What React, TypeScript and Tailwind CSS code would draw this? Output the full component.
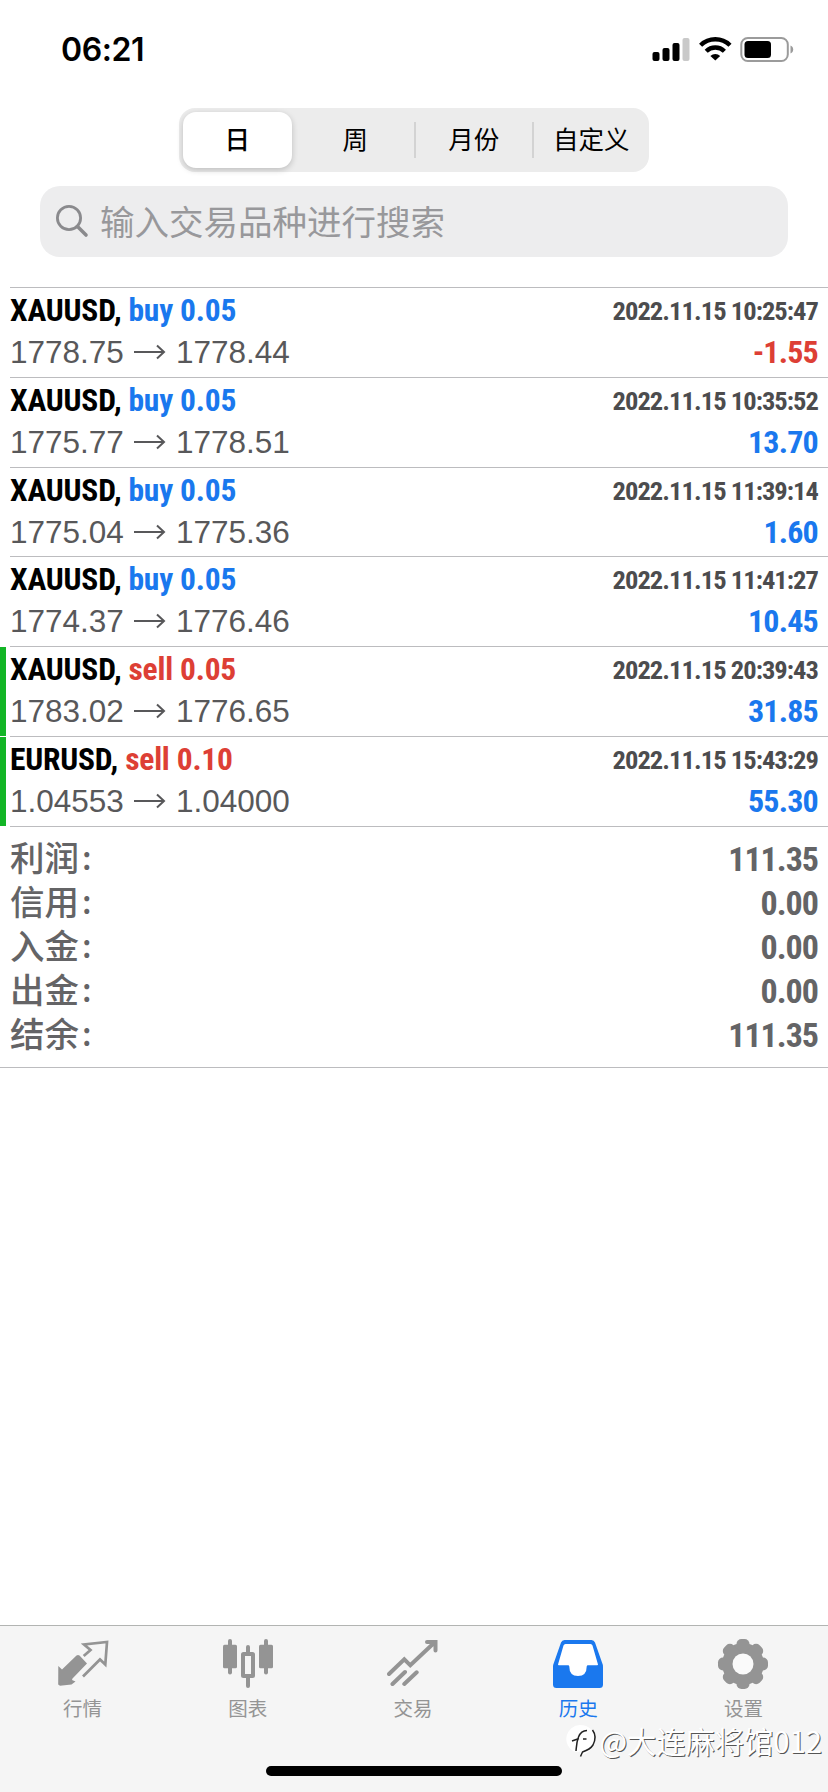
import type { ReactNode } from 'react';
import clsx from 'clsx';

interface Deal {
  symbol: string;
  side: 'buy' | 'sell';
  lots: string;
  open: string;
  close: string;
  time: string;
  profit: string;
  /** Green marker on the left edge of the row. */
  marked?: boolean;
}

const PERIODS = ['日', '周', '月份', '自定义'];

const DEALS: Deal[] = [
  { symbol: 'XAUUSD', side: 'buy', lots: '0.05', open: '1778.75', close: '1778.44', time: '2022.11.15 10:25:47', profit: '-1.55' },
  { symbol: 'XAUUSD', side: 'buy', lots: '0.05', open: '1775.77', close: '1778.51', time: '2022.11.15 10:35:52', profit: '13.70' },
  { symbol: 'XAUUSD', side: 'buy', lots: '0.05', open: '1775.04', close: '1775.36', time: '2022.11.15 11:39:14', profit: '1.60' },
  { symbol: 'XAUUSD', side: 'buy', lots: '0.05', open: '1774.37', close: '1776.46', time: '2022.11.15 11:41:27', profit: '10.45' },
  { symbol: 'XAUUSD', side: 'sell', lots: '0.05', open: '1783.02', close: '1776.65', time: '2022.11.15 20:39:43', profit: '31.85', marked: true },
  { symbol: 'EURUSD', side: 'sell', lots: '0.10', open: '1.04553', close: '1.04000', time: '2022.11.15 15:43:29', profit: '55.30', marked: true },
];

const SUMMARY = [
  { label: '利润', value: '111.35' },
  { label: '信用', value: '0.00' },
  { label: '入金', value: '0.00' },
  { label: '出金', value: '0.00' },
  { label: '结余', value: '111.35' },
];

function StatusBar() {
  return (
    <div className="flex h-[108px] items-start justify-between pl-[61px] pr-[34px] pt-[30px]">
      <span className="font-['Inter',sans-serif] text-[32px] font-semibold leading-10 tracking-[-0.4px]">06:21</span>
      <svg className="mt-[6px]" width="142" height="28" viewBox="0 0 142 28">
        <rect x="0.5" y="16" width="7" height="9" rx="2" />
        <rect x="10.5" y="12" width="7" height="13" rx="2" />
        <rect x="20.5" y="7" width="7" height="18" rx="2" />
        <rect x="30.5" y="2" width="7" height="23" rx="2" fill="#c9c9c9" />
        <g fill="none" stroke="#000" strokeWidth="4.4">
          <path d="M48.6 9.2a21 21 0 0 1 29.4 0" />
          <path d="M54.2 15.2a13 13 0 0 1 18.2 0" />
        </g>
        <path d="M63.3 24.6l-4.9-4.6a7.2 7.2 0 0 1 9.8 0z" />
        <rect x="89.3" y="2" width="46.5" height="23" rx="6.5" fill="none" stroke="#9b9b9b" strokeWidth="2" />
        <rect x="92.5" y="5" width="26.5" height="17" rx="3.5" />
        <path d="M138.5 9.5c3.6 1.2 3.6 6.8 0 8z" fill="#9b9b9b" />
      </svg>
    </div>
  );
}

function PeriodSwitch() {
  return (
    <div className="mx-auto flex h-16 w-[470px] rounded-2xl bg-[#ececec]">
      {PERIODS.map((period, i) => (
        <div key={period} className="flex flex-1 items-center">
          <div className={clsx('h-9 w-0.5', i > 1 && 'bg-[#d3d3d3]')} />
          <button
            type="button"
            className={clsx(
              'h-14 flex-1 pt-0.5 text-[25.5px] leading-none',
              i === 0 && 'ml-0.5 mr-[5px] rounded-[13px] bg-white font-medium shadow-[0_2px_6px_rgba(0,0,0,0.2)]',
              i === 1 && 'pr-0.5',
            )}
          >
            {period}
          </button>
        </div>
      ))}
    </div>
  );
}

function SearchField() {
  return (
    <div className="mx-10 mt-3.5 flex h-[71px] items-center rounded-[20px] bg-[#ededee] pl-4 text-[#8a8a8d]">
      <svg width="33" height="33" viewBox="0 0 33 33" fill="none" stroke="currentColor">
        <circle cx="13" cy="13" r="11.6" strokeWidth="2.8" />
        <path d="M21.5 21.5l8.5 8.5" strokeWidth="3.6" strokeLinecap="round" />
      </svg>
      <span className="ml-[11px] pt-[3px] text-[34.5px] leading-none text-[#98989b]">输入交易品种进行搜索</span>
    </div>
  );
}

function DealRow({ deal }: { deal: Deal }) {
  return (
    <li className="flex h-[89.83px]">
      <div className={clsx('mt-px w-1.5', deal.marked && 'bg-[#13b526]')} />
      <div className="ml-1 flex-1 border-t border-[#bcbcbf] pr-2.5 pt-[3px]">
        <div className="flex h-10 items-center justify-between font-['Roboto',sans-serif] font-bold [font-stretch:75%]">
          <p className="text-[31.5px] leading-10 tracking-[-0.2px]">
            {deal.symbol},{' '}
            <span className={deal.side === 'buy' ? 'text-[#1a78ee]' : 'text-[#dd3f35]'}>
              {deal.side} {deal.lots}
            </span>
          </p>
          <time className="text-[26.5px] leading-[38px] tracking-[-0.95px] text-[#4c4c4e]">{deal.time}</time>
        </div>
        <div className="flex h-[42px] items-center justify-between">
          <p className="flex items-center font-['Liberation_Sans',sans-serif] text-[31.5px] leading-[42px] text-[#58585a]">
            {deal.open}
            <svg className="mx-2.5" width="32" height="16" viewBox="0 0 32 16" fill="none" stroke="currentColor" strokeWidth="2">
              <path d="M0 8h30M23 1.5L30 8l-7 6.5" />
            </svg>
            {deal.close}
          </p>
          <span
            className={clsx(
              "font-['Roboto',sans-serif] text-[32px] font-bold leading-[42px] tracking-[-0.8px] [font-stretch:75%]",
              deal.profit.startsWith('-') ? 'text-[#dd3f35]' : 'text-[#1a78ee]',
            )}
          >
            {deal.profit}
          </span>
        </div>
      </div>
    </li>
  );
}

function Summary() {
  return (
    <div className="border-b border-[#bcbcbf] pb-2.5 pl-2.5">
      <dl className="border-t border-[#bcbcbf] pr-2.5 pt-2.5 text-[#646466]">
        {SUMMARY.map(({ label, value }) => (
          <div key={label} className="flex h-11 items-center justify-between">
            <dt className="flex items-center text-[34.5px] font-medium leading-[44px]">
              {label}
              <span className="mb-1.5 ml-[3px] font-['Noto_Sans_CJK_SC',sans-serif] text-[32px] leading-8">:</span>
            </dt>
            <dd className="font-['Roboto',sans-serif] text-[34px] font-bold leading-[44px] tracking-[-1px] [font-stretch:75%]">
              {value}
            </dd>
          </div>
        ))}
      </dl>
    </div>
  );
}

function QuotesIcon() {
  return (
    <svg width="52" height="52" viewBox="0 0 52 52">
      <path
        d="M1.3 28L5 31.5l14.5-14q1.5-1 3 0l7.5 8-14.5 15-.5 1.5 3.5 1.5-4 3L3 47.7l-1.8-1.2z"
        fill="currentColor"
      />
      <path d="M26.7 18l6.8-6L27 6.5 50 4l-1.7 22.5-5.3-5-17 17" fill="none" stroke="currentColor" strokeWidth="2.7" />
    </svg>
  );
}

function ChartIcon() {
  return (
    <svg width="50" height="52" viewBox="0 0 50 52" fill="currentColor">
      <rect y="6.7" width="14" height="23.5" rx="1.5" />
      <rect x="5" y="1" width="4" height="35.5" rx="2" />
      <rect x="20" y="16" width="10" height="22" rx="0.5" fill="none" stroke="currentColor" strokeWidth="4" />
      <rect x="23" y="7" width="4" height="9" rx="2" />
      <rect x="23" y="38" width="4" height="12" rx="2" />
      <rect x="36" y="6.7" width="14" height="23.5" rx="1.5" />
      <rect x="41" y="1" width="4" height="35.5" rx="2" />
    </svg>
  );
}

function TradeIcon() {
  return (
    <svg width="52" height="52" viewBox="0 0 52 52" fill="none" stroke="currentColor" strokeWidth="4" strokeLinecap="round">
      <path d="M2 36l15.3-14.7 6 6L48 4M40 4h8.5v8.5M5.5 46L18 34M17.3 46l12.4-11.7" />
    </svg>
  );
}

function HistoryIcon() {
  return (
    <svg width="52" height="52" viewBox="0 0 52 52" fill="currentColor">
      <path d="M12.5 2h27q2.5 0 3.5 2.5l7 20q1 2 1 4.5v17.5q0 3.5-3.5 3.5h-43Q1 50 1 46.5V29q0-2.5 1-4.5l7-20Q10 2 12.5 2z" />
      <path
        d="M13.5 6h25q1.5 0 2 1.5l5.5 19q0 .8-.8.8H36q-1.3 0-1.3 1.3 0 9.5-8.7 9.5t-8.7-9.5q0-1.3-1.3-1.3H6.8q-.8 0-.8-.8l5.5-19Q12 6 13.5 6z"
        fill="#fff"
      />
    </svg>
  );
}

function SettingsIcon() {
  return (
    <svg width="52" height="52" viewBox="0 0 52 52" fill="currentColor">
      <circle cx="26" cy="26" r="21" />
      {[0, 45, 90, 135].map((angle) => (
        <rect key={angle} x="19.5" y="1" width="13" height="50" rx="5" transform={`rotate(${angle} 26 26)`} />
      ))}
      <circle cx="26" cy="26" r="10.5" fill="#fafafa" />
    </svg>
  );
}

const TABS: { label: string; icon: ReactNode; active?: boolean }[] = [
  { label: '行情', icon: <QuotesIcon /> },
  { label: '图表', icon: <ChartIcon /> },
  { label: '交易', icon: <TradeIcon /> },
  { label: '历史', icon: <HistoryIcon />, active: true },
  { label: '设置', icon: <SettingsIcon /> },
];

function TabBar() {
  return (
    <nav className="flex h-[167px] flex-col border-t border-[#b2b4b2] bg-[#f5f5f5]">
      <div className="flex pr-0.5">
        {TABS.map(({ label, icon, active }) => (
          <div
            key={label}
            className={clsx('flex flex-1 flex-col items-center pt-3', active ? 'text-[#1a78ee]' : 'text-[#949494]')}
          >
            {icon}
            <span className="mt-[5px] text-[19.5px] leading-7">{label}</span>
          </div>
        ))}
      </div>
      <div className="mx-auto mb-4 mt-auto h-2.5 w-[296px] rounded-full bg-black" />
    </nav>
  );
}

function Watermark() {
  return (
    <div className="absolute bottom-[31px] right-[6px] flex items-center text-white">
      <svg className="mt-1" width="34" height="38" viewBox="0 0 34 38">
        <path d="M15 2a14 14 0 0 0-6 26.5c3 .8 5 .5 6.5-.5l-.5 5c9-3 15-9 14.5-17C29.5 8 24 2 15 2z" fill="#fff" />
        <g fill="none" stroke="#222" strokeWidth="1.5">
          <path d="M11 28c.5-5 .5-9 2.500-14 1.500-4 4-6.500 8.500-6.500M7 18l7-2.500M18 16h3.500" />
          <path d="M27.500 7c3 4 3 10 .5 15-2.500 4-6 5.500-10.500 7l-2 4.500" />
        </g>
      </svg>
      <span className="font-['Noto_Sans_CJK_SC',sans-serif] text-[29.25px] leading-10 [text-shadow:1px_1px_0_#555]">
        @大连麻将馆012
      </span>
    </div>
  );
}

export default function App() {
  return (
    <div className="relative flex h-[1792px] w-[828px] flex-col overflow-hidden bg-white font-['Liberation_Sans','Noto_Sans_CJK_SC',sans-serif] text-black">
      <StatusBar />
      <PeriodSwitch />
      <SearchField />
      <ul className="mt-[30px]">
        {DEALS.map((deal) => (
          <DealRow key={deal.time} deal={deal} />
        ))}
      </ul>
      <Summary />
      <div className="flex-1" />
      <TabBar />
      <Watermark />
    </div>
  );
}
